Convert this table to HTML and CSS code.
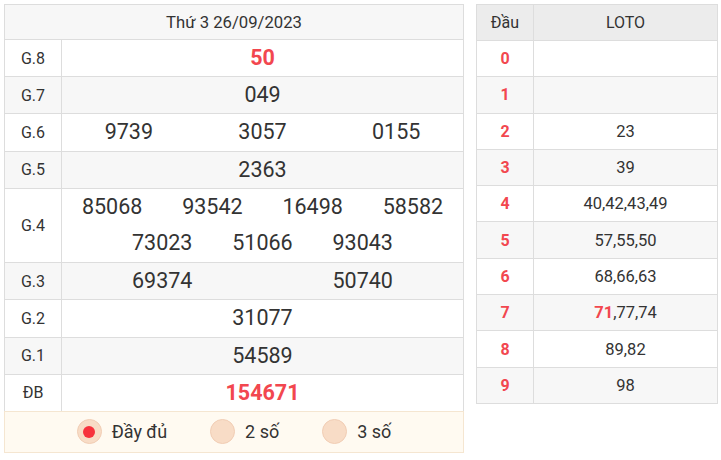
FILE: index.html
```html
<!DOCTYPE html>
<html lang="vi">
<head>
<meta charset="utf-8">
<title>XSMB 26/09/2023</title>
<link rel="stylesheet" href="styles.css">
</head>
<body>
<div class="page">
  <div class="result">
    <div class="board">
      <div class="head">Thứ 3 26/09/2023</div>
      <div class="row">
        <div class="label">G.8</div>
        <div class="nums"><span class="n w1 red">50</span></div>
      </div>
      <div class="row alt">
        <div class="label">G.7</div>
        <div class="nums"><span class="n w1">049</span></div>
      </div>
      <div class="row">
        <div class="label">G.6</div>
        <div class="nums"><span class="n w3">9739</span><span class="n w3">3057</span><span class="n w3">0155</span></div>
      </div>
      <div class="row alt">
        <div class="label">G.5</div>
        <div class="nums"><span class="n w1">2363</span></div>
      </div>
      <div class="row tall">
        <div class="label">G.4</div>
        <div class="nums"><span class="n w4">85068</span><span class="n w4">93542</span><span class="n w4">16498</span><span class="n w4">58582</span><span class="n w4">73023</span><span class="n w4">51066</span><span class="n w4">93043</span></div>
      </div>
      <div class="row alt">
        <div class="label">G.3</div>
        <div class="nums"><span class="n w2">69374</span><span class="n w2">50740</span></div>
      </div>
      <div class="row">
        <div class="label">G.2</div>
        <div class="nums"><span class="n w1">31077</span></div>
      </div>
      <div class="row alt">
        <div class="label">G.1</div>
        <div class="nums"><span class="n w1">54589</span></div>
      </div>
      <div class="row last">
        <div class="label">ĐB</div>
        <div class="nums"><span class="n w1 red">154671</span></div>
      </div>
    </div>
    <div class="options">
      <label class="opt"><span class="radio on"></span>Đầy đủ</label>
      <label class="opt"><span class="radio"></span>2 số</label>
      <label class="opt"><span class="radio"></span>3 số</label>
    </div>
  </div>

  <div class="loto">
    <div class="lrow lhead"><div class="dau">Đầu</div><div class="vals">LOTO</div></div>
    <div class="lrow"><div class="dau red">0</div><div class="vals"></div></div>
    <div class="lrow alt"><div class="dau red">1</div><div class="vals"></div></div>
    <div class="lrow"><div class="dau red">2</div><div class="vals">23</div></div>
    <div class="lrow alt"><div class="dau red">3</div><div class="vals">39</div></div>
    <div class="lrow"><div class="dau red">4</div><div class="vals">40,42,43,49</div></div>
    <div class="lrow alt"><div class="dau red">5</div><div class="vals">57,55,50</div></div>
    <div class="lrow"><div class="dau red">6</div><div class="vals">68,66,63</div></div>
    <div class="lrow alt"><div class="dau red">7</div><div class="vals"><span class="hl">71</span>,77,74</div></div>
    <div class="lrow"><div class="dau red">8</div><div class="vals">89,82</div></div>
    <div class="lrow alt last"><div class="dau red">9</div><div class="vals">98</div></div>
  </div>
</div>
</body>
</html>
```

FILE: styles.css
```css
* { box-sizing: border-box; }
html, body { margin: 0; padding: 0; background: #fff; }
body {
  font-family: Roboto, "Liberation Sans", Arial, sans-serif;
  color: #333;
  font-size: 16px;
}
.page {
  display: flex;
  align-items: flex-start;
  gap: 12px;
  padding: 4px 0 0 4px;
}
.result { width: 460px; }
.board {
  border: 1px solid #ddd;
  border-bottom: none;
}
.head {
  height: 35px;
  background: #f7f7f7;
  border-bottom: 1px solid #ddd;
  display: flex;
  align-items: center;
  justify-content: center;
  font-size: 16.7px;
}
.row {
  display: flex;
  height: 37.2px;
  border-bottom: 1px solid #ddd;
  background: #fff;
}
.row.alt { background: #f7f7f7; }
.row.tall { height: 74.4px; }
.row.last { border-bottom: none; height: 36.2px; }
.label {
  width: 57px;
  flex: none;
  border-right: 1px solid #ddd;
  display: flex;
  align-items: center;
  justify-content: center;
}
.nums {
  flex: 1;
  display: flex;
  flex-wrap: wrap;
  justify-content: center;
  align-content: center;
}
.n {
  font-size: 21.5px;
  line-height: 36px;
  text-align: center;
}
.w1 { width: 100%; }
.w2 { width: 50%; }
.w3 { width: 33.333%; }
.w4 { width: 25%; }
.red { color: #f2474f; font-weight: 700; }

.options {
  height: 42px;
  background: #fffaf1;
  border: 1px solid #f5e6d1;
  display: flex;
  align-items: center;
  justify-content: center;
  gap: 43px;
  font-size: 18px;
}
.opt {
  display: flex;
  align-items: center;
  gap: 10px;
}
.radio {
  width: 25px;
  height: 25px;
  border-radius: 50%;
  background: #f8dcc6;
  border: 1px solid #f1cdb4;
  display: flex;
  align-items: center;
  justify-content: center;
}
.radio.on::after {
  content: "";
  width: 12px;
  height: 12px;
  border-radius: 50%;
  background: #f7323c;
}

.loto {
  width: 242px;
  border: 1px solid #ddd;
}
.lrow {
  display: flex;
  height: 36.3px;
  border-bottom: 1px solid #ddd;
  background: #fff;
}
.lrow.alt { background: #f7f7f7; }
.lrow.last { border-bottom: none; height: 35.3px; }
.lrow.lhead { background: #ececec; height: 36px; }
.dau {
  width: 57px;
  flex: none;
  border-right: 1px solid #ddd;
  display: flex;
  align-items: center;
  justify-content: center;
}
.vals {
  flex: 1;
  display: flex;
  align-items: center;
  justify-content: center;
  font-size: 16.5px;
}
.lhead .vals { font-size: 16px; }
.hl { color: #f2474f; font-weight: 700; }
```
